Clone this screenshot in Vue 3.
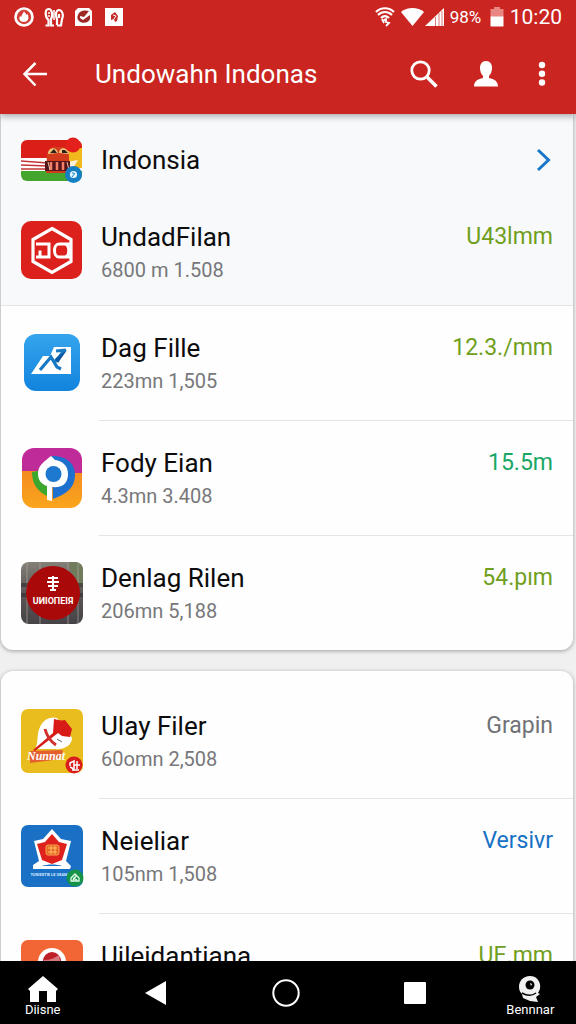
<script setup>
const featured = [
  { id: 'undad', name: 'UndadFilan', detail: '6800 m 1.508', value: 'U43lmm', tone: 'olive', shaded: true },
  { id: 'dag', name: 'Dag Fille', detail: '223mn 1,505', value: '12.3./mm', tone: 'olive' },
  { id: 'fody', name: 'Fody Eian', detail: '4.3mn 3.408', value: '15.5m', tone: 'green' },
  { id: 'denlag', name: 'Denlag Rilen', detail: '206mn 5,188', value: '54.pım', tone: 'olive' },
]
const more = [
  { id: 'ulay', name: 'Ulay Filer', detail: '60omn 2,508', value: 'Grapin', tone: 'gray' },
  { id: 'neie', name: 'Neieliar', detail: '105nm 1,508', value: 'Versivr', tone: 'blue' },
  { id: 'uile', name: 'Uileidantiana', value: 'UE.mm', tone: 'olive' },
]
const groups = [
  { key: 'featured', lead: true, items: featured },
  { key: 'more', lead: false, items: more },
]
</script>

<template>
  <div class="screen">
    <header class="top">
      <div class="status">
        <div class="status-left">
          <svg width="20" height="20" viewBox="0 0 20 20">
            <circle cx="10" cy="10" r="8.5" fill="#d43c36" stroke="#fff" stroke-width="2.6" />
            <path d="M10 4c.5 2 2 2 2.600 4l1-1c2 4 .5 8-3.600 8s-5.500-3-4-6l1.300 1C7.500 7 9.500 6.500 10 4z" fill="#fff" />
          </svg>
          <svg width="20" height="20" viewBox="0 0 20 20" fill="none" stroke="#fff" stroke-width="2.200">
            <path d="M1.500 18.500h3V13C1 10 .5 2 4.500 2S9 9 7 12v6.500h3" />
            <path d="M4 6h2M4 9h2M10 3v10" stroke-width="1.500" />
            <path d="M13 18v-6c-2-4-1-9 2-9s5 5 3 9l-1 6.500h-4M15 7v4" />
          </svg>
          <svg width="20" height="20" viewBox="0 0 20 20">
            <path d="M1 4l3-3h11l3 3v15H1z" fill="#fff" />
            <path d="M4 8c2-5 7-5 11-4l-5 6-4-1v2l3 2 7-5v4c-1 4-8 5-11 2-2-2-2-4-1-6z" fill="#9f2825" />
          </svg>
          <svg width="20" height="20" viewBox="0 0 20 20">
            <path d="M1 1h18v18H1z" fill="#fff" />
            <path d="M7 8l4-3 3 4-1 5-2 1-1-3-3 1z" fill="#c52a26" />
            <path d="M9 8l3 1-2 3" fill="none" stroke="#fff" />
          </svg>
        </div>
        <div class="status-right">
          <svg width="20" height="20" viewBox="0 0 20 20" fill="none" stroke="#fff" stroke-width="2.200">
            <path d="M1 5c5-5 13-5 18 0M3 8c4-4 10-4 14 0M6 11c3-3 6-2 8 0" />
            <path d="M8 14l3-2v3l3 1-3 3M7 12l2 4" stroke-width="1.800" />
          </svg>
          <svg width="43" height="20" viewBox="0 0 43 20">
            <path d="M0 5C6-.5 17-.5 23 5L11.500 19z" fill="#fff" />
            <path d="M24 19L43 1v18z" fill="#fff" />
            <path d="M34.500 10v9M38 6v13M41 4v15" stroke="#df7b76" stroke-width="1" />
          </svg>
          <span class="percent">98%</span>
          <svg width="14" height="20" viewBox="0 0 14 20">
            <path d="M4 0h6v2h3.500v8H.5V2H4z" fill="#e98681" />
            <path d="M.5 9.500h13V19.500H.5z" fill="#fff" />
          </svg>
          <time class="clock">10:20</time>
        </div>
      </div>
      <div class="appbar">
        <button class="icon-btn" aria-label="Back">
          <svg width="26" height="26" viewBox="0 0 26 26" fill="none" stroke="#fff" stroke-width="2.500">
            <path d="M25 13H3M13.500 2L2.500 13l11 11.500" />
          </svg>
        </button>
        <h1>Undowahn Indonas</h1>
        <div class="actions">
          <button class="icon-btn" aria-label="Search">
            <svg width="28" height="28" viewBox="0 0 28 28" fill="none" stroke="#fff">
              <circle cx="10.500" cy="10.500" r="8.700" stroke-width="2.800" />
              <path d="M17 17l9.500 9.500" stroke-width="3.600" />
            </svg>
          </button>
          <button class="icon-btn" aria-label="Account">
            <svg width="26" height="26" viewBox="0 0 26 26" fill="#fff">
              <path d="M13 0c-4 0-6 3-6 7 0 3 1 6 3 8v2c-5 1-9 3-9 8.500h24c0-5.500-4-7.500-9-8.500v-2c2-2 3-5 3-8 0-4-2-7-6-7z" />
            </svg>
          </button>
          <button class="icon-btn" aria-label="More options">
            <svg width="16" height="26" viewBox="0 0 16 26" fill="#fff">
              <circle cx="8" cy="4" r="3.200" /><circle cx="8" cy="12.700" r="3.200" /><circle cx="8" cy="21.500" r="3.200" />
            </svg>
          </button>
        </div>
      </div>
    </header>

    <main class="content">
      <section v-for="group in groups" :key="group.key" class="card" :class="{ first: group.lead }">
        <a v-if="group.lead" class="lead" href="#indonsia">
          <span class="thumb">
            <svg width="64" height="48" viewBox="0 0 64 48">
              <clipPath id="flag"><rect x="1" y="4" width="61" height="41" rx="6" /></clipPath>
              <g clip-path="url(#flag)">
                <path d="M0 0h64v24H0z" fill="#da1f19" />
                <path d="M48 12h14v20H48z" fill="#f1b91b" />
                <path d="M0 22h28v14H0z" fill="#fff" />
                <path d="M0 25l28 2M0 29l28 1M0 33h28" stroke="#c33439" stroke-width="1.500" />
                <path d="M0 35h64v13H0z" fill="#43a52d" />
                <path d="M46 26l12-2-6 10h-6z" fill="#fff1d8" />
              </g>
              <path d="M27 19c1-7 5-9 11-8 6-1 10 1 11 8v18H26z" fill="#d33b1d" />
              <path d="M28 18c0-7 9-8 10-1zM39 17c0-7 9-6 10 1z" fill="#f4c47c" />
              <path d="M30 17l4-4 3 4zM42 14h3l3 3h-6z" fill="#2b211a" />
              <path d="M25 25h25v10H25z" fill="#53141a" />
              <path d="M31 26v8M37 26v8M43 26v8" stroke="#f57f68" stroke-width="2.500" />
              <path d="M28 26l2 8M47 26l2 8" stroke="#f3c4ad" />
              <circle cx="53" cy="9" r="7.500" fill="#e4201c" />
              <circle cx="53.500" cy="38.500" r="8.500" fill="#167fc4" />
              <circle cx="53.500" cy="38.500" r="3.600" fill="#e8f5ff" />
              <path d="M52 41l3-4M52 37h2" stroke="#167fc4" />
            </svg>
          </span>
          <span class="name">Indonsia</span>
          <svg class="chevron" width="18" height="24" viewBox="0 0 18 24" fill="none" stroke="#1976c9" stroke-width="3">
            <path d="M3 2l10.500 10L3 22" />
          </svg>
        </a>
        <ul class="rows">
          <li v-for="item in group.items" :key="item.id" class="row" :class="{ shaded: item.shaded }">
            <span class="thumb">
              <svg v-if="item.id === 'undad'" width="62" height="60" viewBox="0 0 62 60">
                <rect x="0" y="1" width="61" height="58" rx="10" fill="#dc211c" />
                <path d="M31 8.500l19 11v22l-19 11-19-11v-22z" fill="none" stroke="#fff" stroke-width="3.200" />
                <path d="M15 24h13v13H15M19 30.500v6M50 24H38c-6 0-6 13 0 13h11M40 24h4c5 1 5 12 0 13" fill="none" stroke="#fff" stroke-width="3" />
              </svg>
              <svg v-else-if="item.id === 'dag'" width="56" height="57" viewBox="0 0 56 57">
                <defs><linearGradient id="sky" x1="0" y1="0" x2="0" y2="1"><stop offset="0" stop-color="#35a4ed" /><stop offset="1" stop-color="#1284dd" /></linearGradient></defs>
                <rect width="56" height="57" rx="12" fill="url(#sky)" />
                <path d="M7 40l12-18h7l4-9h17v27z" fill="#fff" />
                <path d="M16 36l11-13 6 10 4 2M26 22l5 7M30 29l10-12M32 17l10-1" fill="none" stroke="#1879c5" stroke-width="3.200" />
                <path d="M43 16l-9 13-3-4z" fill="#0c579f" />
              </svg>
              <svg v-else-if="item.id === 'fody'" width="62" height="62" viewBox="0 0 62 62">
                <defs>
                  <clipPath id="tile"><rect x="1" y="1" width="60" height="60" rx="12" /></clipPath>
                  <linearGradient id="amber" x1="0" y1="0" x2="0" y2="1"><stop offset="0" stop-color="#f48b21" /><stop offset="1" stop-color="#faa61c" /></linearGradient>
                </defs>
                <g clip-path="url(#tile)">
                  <path d="M0 0h62v27H0z" fill="#bf2b99" />
                  <path d="M0 24h18v2h44v36H0z" fill="url(#amber)" />
                </g>
                <path d="M11 25c0 13 6 20 17 25V22z" fill="#3da72d" />
                <path d="M31 9c14 0 23 7 23 19 0 13-9 19-22 24z" fill="#1e70cf" />
                <path d="M17 26c0-8 7-12 13-17l4 4c8 1 13 6 13 14 0 9-5 14-16 13v14l-5-1V39c-6-2-9-6-9-13z" fill="#fff" />
                <circle cx="32.500" cy="27" r="8" fill="#1d78cf" />
              </svg>
              <svg v-else-if="item.id === 'denlag'" width="64" height="64" viewBox="0 0 64 64">
                <defs>
                  <clipPath id="photo"><rect x="1" y="1" width="62" height="62" rx="8" /></clipPath>
                  <linearGradient id="stone" x1="0" y1="0" x2="0" y2="1"><stop offset="0" stop-color="#858279" /><stop offset=".5" stop-color="#5c5656" /><stop offset="1" stop-color="#464347" /></linearGradient>
                </defs>
                <g clip-path="url(#photo)">
                  <path d="M0 0h64v64H0z" fill="url(#stone)" />
                  <path d="M49 0h15v25H54z" fill="#717b5d" />
                  <path d="M7 0v64M20 0v64M48 0v64M58 0v64" stroke="#aaa49a" stroke-width="2" opacity=".35" />
                  <path d="M0 24h8M0 34h8M56 24h8M56 34h8" stroke="#302d30" stroke-width="4" opacity=".6" />
                </g>
                <circle cx="33" cy="32" r="27" fill="#a90908" />
                <path d="M33 15v15M28 17h10M27 21h12M28 25h10M30 29h6" stroke="#fff" stroke-width="2" />
                <text x="33" y="43" class="logo-word" text-anchor="middle">UИIOПEIЯ</text>
              </svg>
              <svg v-else-if="item.id === 'ulay'" width="64" height="66" viewBox="0 0 64 66">
                <rect x="1" y="1" width="62" height="64" rx="7" fill="#e9bd1e" />
                <path d="M15 41c4-6 1-14 5-22 3-7 10-11 17-9l8 10 7 10c0 8-9 12-18 11z" fill="#fff" />
                <path d="M34 11c4 1 8 2 11 1l7 9-2 8-8-1-4-3-23 18-2-1 20-17z" fill="#d81b17" />
                <path d="M25 21c2 8 5 12 11 16" fill="none" stroke="#d2312b" stroke-width="3" />
                <path d="M37 31l5 3" stroke="#69666a" />
                <path d="M10 43l33-1-2 9-31 4z" fill="#e4602f" />
                <text x="26" y="52" class="script-word" text-anchor="middle">Nunnat</text>
                <circle cx="54" cy="57" r="8.500" fill="#d91c1c" />
                <path d="M50 58v-3l4-2v8l-4-2M57 53v8M54 57h6M52 62h7" fill="none" stroke="#fff" stroke-width="1.500" />
              </svg>
              <svg v-else-if="item.id === 'neie'" width="64" height="64" viewBox="0 0 64 64">
                <rect x="1" y="1" width="62" height="62" rx="7" fill="#1970c5" />
                <path d="M32 5l9 10 10 2-5 20 5 5-1 3H13v-4l6-4-5-20 9-2z" fill="#fff" />
                <path d="M32 10l7 8 8 2-5 16-10 4-10-4-5-16 8-2z" fill="#df211d" />
                <rect x="26" y="21" width="13" height="10" rx="2" fill="#e66925" stroke="#f9a151" />
                <path d="M28 24h9M28 28h9M31 22v8M35 22v8" stroke="#ffc164" />
                <path d="M22 42c5-2 15-2 20 0z" fill="#1970c5" />
                <text x="29" y="52" class="micro-word" text-anchor="middle">TUNIESTIE LE UEAM</text>
                <circle cx="55" cy="54" r="8.500" fill="#159348" />
                <path d="M51 54l4-4 4 4v3h-8zM53 54l4 2M56 52l-3 4" fill="none" stroke="#dffbe6" stroke-width="1.300" />
              </svg>
              <svg v-else width="64" height="64" viewBox="0 0 64 64">
                <rect x="1" y="1" width="62" height="62" rx="7" fill="#f26534" />
                <circle cx="32" cy="23" r="14" fill="#fff" />
                <circle cx="32" cy="22" r="9" fill="#bd2027" />
                <path d="M24 21c6 0 11-2 15-5l3 18H22z" fill="#fff" opacity=".4" />
              </svg>
            </span>
            <div class="text">
              <p class="name">{{ item.name }}</p>
              <p v-if="item.detail" class="detail">{{ item.detail }}</p>
            </div>
            <span class="value" :class="item.tone">{{ item.value }}</span>
          </li>
        </ul>
      </section>
    </main>

    <nav class="bottom">
      <button class="nav-btn labelled">
        <svg width="30" height="26" viewBox="0 0 30 26" fill="#fff">
          <path d="M15 0L0 13l2 2v11h9V15h8v11h9V15l2-2z" />
        </svg>
        <span>Diisne</span>
      </button>
      <button class="nav-btn" aria-label="Back">
        <svg width="22" height="24" viewBox="0 0 22 24" fill="#fff"><path d="M21 0v24L0 12z" /></svg>
      </button>
      <button class="nav-btn" aria-label="Home">
        <svg width="28" height="28" viewBox="0 0 28 28"><circle cx="14" cy="14" r="12.700" fill="none" stroke="#fff" stroke-width="2" /></svg>
      </button>
      <button class="nav-btn" aria-label="Recent apps">
        <svg width="22" height="22" viewBox="0 0 22 22"><rect width="22" height="22" rx="1" fill="#fff" /></svg>
      </button>
      <button class="nav-btn labelled">
        <svg width="24" height="26" viewBox="0 0 24 26">
          <path d="M12 0C5 0 1 5 1 11c0 4 2 6 3 7l1 4 7 3 8 1-2-5 4-3-2-1c5-7 1-17-8-17z" fill="#f1f1f1" />
          <circle cx="12" cy="9" r="4.500" fill="#000" />
          <path d="M12 7l2 1-1 2z" fill="#fff" />
          <path d="M4 17c5 3 10 3 14 0" fill="none" stroke="#000" stroke-width="1.500" />
        </svg>
        <span>Bennnar</span>
      </button>
    </nav>
  </div>
</template>

<style>
body { margin: 0; }
</style>

<style scoped>
* { box-sizing: border-box; }
.screen {
  height: 100vh;
  display: flex;
  flex-direction: column;
  background: #f0f0f1;
  color: #0c0c0c;
  font-family: Roboto, "Liberation Sans", sans-serif;
}
button {
  padding: 0;
  border: 0;
  background: none;
  color: inherit;
  font: inherit;
}
svg { display: block; flex: none; }
.top {
  position: relative;
  z-index: 1;
  flex: none;
  background: #ca2521;
  color: #fff;
  box-shadow: 0 2px 7px rgba(0, 0, 0, 0.35);
}
.status {
  height: 34px;
  padding: 0 14px;
  display: flex;
  align-items: center;
  justify-content: space-between;
}
.status-left { display: flex; gap: 10px; }
.status-right { display: flex; align-items: center; gap: 6px; }
.percent { width: 34px; font-size: 17px; line-height: 20px; }
.clock { font-size: 21px; line-height: 24px; }
.appbar {
  height: 80px;
  padding: 0 26px 0 22px;
  display: flex;
  align-items: center;
}
h1 {
  flex: 1;
  margin: 0 0 0 47px;
  font-size: 26px;
  font-weight: 400;
  line-height: 32px;
}
.actions { display: flex; align-items: center; gap: 35px; }
.content { flex: 1; min-height: 0; overflow: hidden; }
.card {
  margin: 0 3px 21px 1px;
  padding-top: 12px;
  background: #fefefe;
  border-radius: 12px;
  box-shadow: 0 1px 4px rgba(0, 0, 0, 0.35);
}
.card.first { padding-top: 0; border-radius: 0 0 12px 12px; }
.lead {
  height: 80px;
  padding: 12px 20px 0 0;
  display: flex;
  align-items: center;
  background: #f8f9fa;
  color: inherit;
  text-decoration: none;
}
.chevron { margin-left: auto; }
.rows { margin: 0; padding: 0; list-style: none; }
.row {
  position: relative;
  height: 115px;
  padding-right: 20px;
  display: flex;
  align-items: center;
}
.row.shaded { height: 111px; background: #f8f9fa; }
.row + .row::before {
  content: "";
  position: absolute;
  top: 0;
  right: 0;
  left: 98px;
  height: 1px;
  background: #e4e5e8;
}
.row.shaded + .row::before { left: 0; }
.thumb {
  flex: none;
  width: 100px;
  padding-left: 2px;
  display: flex;
  justify-content: center;
}
.text { flex: 1; min-width: 0; align-self: flex-start; padding-top: 27px; }
.name, .detail { margin: 0; white-space: nowrap; }
.name { font-size: 26px; line-height: 32px; }
.detail { color: #77777a; font-size: 20px; line-height: 34px; }
.value { align-self: flex-start; padding-top: 27px; font-size: 23px; line-height: 32px; }
.olive { color: #6f9f1c; }
.green { color: #18a765; }
.gray { color: #707276; }
.blue { color: #1671c4; }
.logo-word { fill: #fff; font: bold 9px Roboto, sans-serif; }
.script-word { fill: #fff; font: italic bold 12px "Liberation Serif", serif; }
.micro-word { fill: #d7ebff; font: bold 4px Roboto, sans-serif; }
.bottom {
  flex: none;
  height: 63px;
  display: grid;
  grid-template-columns: 86fr 142fr 120fr 140fr 92fr;
  background: #000;
  color: #fff;
}
.nav-btn {
  display: flex;
  flex-direction: column;
  align-items: center;
  justify-content: center;
  font-size: 13px;
  line-height: 16px;
}
.nav-btn.labelled { padding-top: 8px; }
</style>
